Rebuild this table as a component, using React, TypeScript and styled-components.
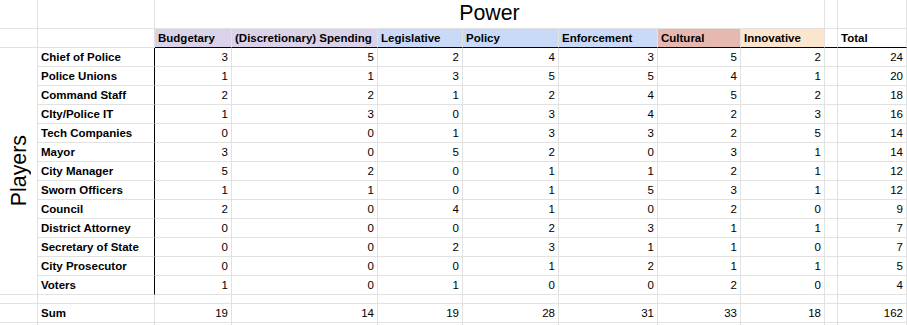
import React from 'react';
import styled, { createGlobalStyle } from 'styled-components';

const GlobalStyle = createGlobalStyle`
    html, body {
        margin: 0;
        padding: 0;
        background: #ffffff;
        overflow: hidden;
    }
    body {
        font-family: "Liberation Sans", Arial, sans-serif;
        color: #000000;
    }
`

const GRID = '#e2e2e2';

const Sheet = styled.div`
    display: grid;
    grid-template-columns: 38px 117px 77px 146px 85px 96px 99px 83px 84px 13px 69px;
    grid-template-rows: 29px 19px repeat(13, 19px) 9px 19px 19px;
    width: 907px;
`
const Cell = styled.div<{ $num?: boolean; $bold?: boolean; $bg?: string; $edge?: boolean; $under?: boolean }>`
    box-sizing: border-box;
    display: flex;
    align-items: flex-end;
    justify-content: ${p => (p.$num ? 'flex-end' : 'flex-start')};
    padding: 0 3px 2px 3px;
    font-size: 11.5px;
    line-height: 14px;
    font-weight: ${p => (p.$bold ? 'bold' : 'normal')};
    background: ${p => p.$bg || 'transparent'};
    border-right: 1px solid ${p => (p.$edge ? '#000000' : GRID)};
    border-bottom: 1px solid ${p => (p.$under ? '#000000' : GRID)};
    white-space: nowrap;
    overflow: hidden;
`
const Title = styled(Cell)`
    grid-column: 3 / span 7;
    justify-content: center;
    font-size: 21.33px;
    line-height: 24px;
    padding-bottom: 3px;
`
const SideLabel = styled.div`
    grid-column: 1;
    grid-row: 3 / span 13;
    box-sizing: border-box;
    display: flex;
    align-items: center;
    justify-content: center;
    border-right: 1px solid ${GRID};
    border-bottom: 1px solid ${GRID};
`
const SideText = styled.span`
    writing-mode: vertical-rl;
    transform: rotate(180deg);
    font-size: 21.33px;
    line-height: 24px;
    margin-left: 1px;
`

const headers: [string, string][] = [
    ['Budgetary', '#d9d2e9'],
    ['(Discretionary) Spending', '#d9d2e9'],
    ['Legislative', '#c9daf8'],
    ['Policy', '#c9daf8'],
    ['Enforcement', '#c9daf8'],
    ['Cultural', '#e6b8af'],
    ['Innovative', '#fce5cd'],
];

const rows: [string, ...number[]][] = [
    ['Chief of Police', 3, 5, 2, 4, 3, 5, 2, 24],
    ['Police Unions', 1, 1, 3, 5, 5, 4, 1, 20],
    ['Command Staff', 2, 2, 1, 2, 4, 5, 2, 18],
    ['CIty/Police IT', 1, 3, 0, 3, 4, 2, 3, 16],
    ['Tech Companies', 0, 0, 1, 3, 3, 2, 5, 14],
    ['Mayor', 3, 0, 5, 2, 0, 3, 1, 14],
    ['City Manager', 5, 2, 0, 1, 1, 2, 1, 12],
    ['Sworn Officers', 1, 1, 0, 1, 5, 3, 1, 12],
    ['Council', 2, 0, 4, 1, 0, 2, 0, 9],
    ['District Attorney', 0, 0, 0, 2, 3, 1, 1, 7],
    ['Secretary of State', 0, 0, 2, 3, 1, 1, 0, 7],
    ['City Prosecutor', 0, 0, 0, 1, 2, 1, 1, 5],
    ['Voters', 1, 0, 1, 0, 0, 2, 0, 4],
];

const sums = [19, 14, 19, 28, 31, 33, 18, 162];

const blank = (key: string, n: number) =>
    Array.from({ length: n }, (_, i) => <Cell key={key + i} />);

export default function App() {
    return (
        <>
            <GlobalStyle />
            <Sheet>
                {/* row 1 */}
                <Cell />
                <Cell />
                <Title>Power</Title>
                <Cell />
                <Cell />

                {/* row 2: headers */}
                <Cell />
                <Cell />
                {headers.map(([label, bg]) => (
                    <Cell key={label} $bold $bg={bg} $under>{label}</Cell>
                ))}
                <Cell $under />
                <Cell $bold $under>Total</Cell>

                <SideLabel>
                    <SideText>Players</SideText>
                </SideLabel>

                {rows.map(([name, ...vals]) => (
                    <React.Fragment key={name}>
                        <Cell $bold $edge>{name}</Cell>
                        {vals.slice(0, 7).map((v, i) => (
                            <Cell key={i} $num>{v}</Cell>
                        ))}
                        <Cell />
                        <Cell $num>{vals[7]}</Cell>
                    </React.Fragment>
                ))}

                {/* spacer row */}
                {blank('sp', 11)}

                {/* sum row */}
                <Cell />
                <Cell $bold>Sum</Cell>
                {sums.slice(0, 7).map((v, i) => (
                    <Cell key={'s' + i} $num>{v}</Cell>
                ))}
                <Cell />
                <Cell $num>{sums[7]}</Cell>

                {blank('tail', 11)}
            </Sheet>
        </>
    );
}
